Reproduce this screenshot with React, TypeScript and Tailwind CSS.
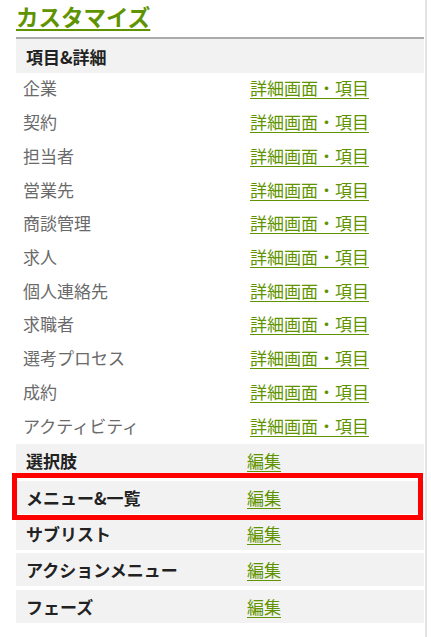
import React from "react";

const dataRows = [
  "企業",
  "契約",
  "担当者",
  "営業先",
  "商談管理",
  "求人",
  "個人連絡先",
  "求職者",
  "選考プロセス",
  "成約",
  "アクティビティ",
];

const grayRows = ["選択肢", "メニュー&一覧", "サブリスト", "アクションメニュー", "フェーズ"];

export default function App() {
  return (
    <div
      className="relative w-[431px] h-[637px] bg-white overflow-hidden"
      style={{ fontFamily: '"Noto Sans CJK JP", "Noto Sans", sans-serif' }}
    >
      <div className="w-[427px] h-full border-r-2 border-[#e2e2e2]">
        <div className="ml-[16px] w-[408px]">
          <div className="h-[37px] pt-[1px]">
            <span className="text-[22.5px] leading-[30px] font-bold text-[#5f9400] underline decoration-2 underline-offset-[3px]">
              カスタマイズ
            </span>
          </div>
          <div className="h-[2px] bg-[#ababab]" />
          <div className="h-[34px] bg-[#f2f2f2] flex items-center pl-[10px]">
            <span className="text-[17px] font-bold text-[#222] leading-none">項目&amp;詳細</span>
          </div>
          {dataRows.map((r) => (
            <div key={r} className="h-[33.73px] flex items-center pb-[4px]">
              <span className="w-[234px] pl-[7px] text-[17px] text-[#6a6a6a] leading-none">{r}</span>
              <a className="text-[17px] leading-none text-[#5f9400] underline underline-offset-[3px]">
                詳細画面・項目
              </a>
            </div>
          ))}
          <div className="flex flex-col gap-[3.3px] mt-[0.5px]">
            {grayRows.map((r) => (
              <div key={r} className="h-[33px] bg-[#f2f2f2] flex items-center">
                <span className="w-[231px] pl-[10px] text-[17px] font-bold text-[#222] leading-none">{r}</span>
                <a className="text-[17px] leading-none text-[#5f9400] underline underline-offset-[3px]">編集</a>
              </div>
            ))}
          </div>
        </div>
      </div>
      <div className="absolute left-[12px] top-[473px] w-[411px] h-[47px] border-[5px] border-[#ff0000]" />
    </div>
  );
}
